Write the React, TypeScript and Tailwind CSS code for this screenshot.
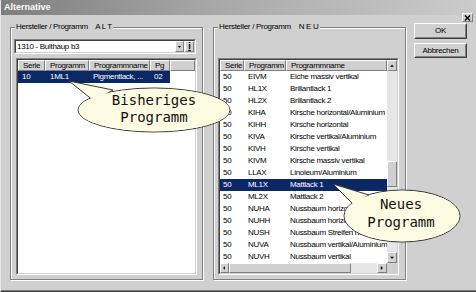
import React from 'react';

const uiFont = "font-['Liberation_Sans_Narrow','Liberation_Sans',Arial,sans-serif]";
const monoFont = "font-['DejaVu_Sans_Mono','Liberation_Mono',monospace]";
const small = 'text-[8px] tracking-[-0.3px]';

const raisedThin = 'bg-[#d0d0d0] border border-t-white border-l-white border-r-[#808080] border-b-[#808080]';

const neuRows = [
  ['50', 'EIVM', 'Eiche massiv vertikal'],
  ['50', 'HL1X', 'Brillantlack 1'],
  ['50', 'HL2X', 'Brillantlack 2'],
  ['50', 'KIHA', 'Kirsche horizontal/Aluminium'],
  ['50', 'KIHH', 'Kirsche horizontal'],
  ['50', 'KIVA', 'Kirsche vertikal/Aluminium'],
  ['50', 'KIVH', 'Kirsche vertikal'],
  ['50', 'KIVM', 'Kirsche massiv vertikal'],
  ['50', 'LLAX', 'Linoleum/Aluminium'],
  ['50', 'ML1X', 'Mattlack 1'],
  ['50', 'ML2X', 'Mattlack 2'],
  ['50', 'NUHA', 'Nussbaum horizontal/Aluminium'],
  ['50', 'NUHH', 'Nussbaum horizontal'],
  ['50', 'NUSH', 'Nussbaum Streifen horizontal'],
  ['50', 'NUVA', 'Nussbaum vertikal/Aluminium'],
  ['50', 'NUVH', 'Nussbaum vertikal'],
];

// small black arrow for scroll / combo buttons
const Arrow = ({ dir }: { dir: 'up' | 'down' | 'left' | 'right' }) => {
  const pts = {
    up: '2.5,6 7.5,6 5,3.5',
    down: '2.5,3.5 7.5,3.5 5,6',
    left: '5.5,2.5 5.5,7.5 3,5',
    right: '3.5,2.5 3.5,7.5 6,5',
  }[dir];
  return (
    <svg width="10" height="10" viewBox="0 0 10 10" className="block">
      <polygon points={pts} fill="#000" />
    </svg>
  );
};

const ScrollBtn = ({ dir, className = '' }: { dir: 'up' | 'down' | 'left' | 'right'; className?: string }) => (
  <div className={`${raisedThin} flex items-center justify-center shrink-0 ${className}`}>
    <Arrow dir={dir} />
  </div>
);

const HeaderCell = ({ label, w }: { label?: string; w?: string }) => (
  <div className={`${raisedThin} h-[11px] pl-[4px] ${small} leading-[9px] whitespace-nowrap overflow-hidden ${w ?? 'flex-1'}`}>
    {label}
  </div>
);

const Button = ({ label, h }: { label: string; h: string }) => (
  <div className={`w-[53px] ${h} flex border border-t-white border-l-white border-r-[#404040] border-b-[#404040]`}>
    <div className={`flex-1 flex items-center justify-center border border-transparent border-r-[#808080] border-b-[#808080] ${small} leading-none`}>
      {label}
    </div>
  </div>
);

const Sunken = ({ children, className = '' }: { children: React.ReactNode; className?: string }) => (
  <div className={`flex border border-t-[#808080] border-l-[#808080] border-r-white border-b-white ${className}`}>
    <div className="flex-1 flex min-w-0 border border-t-[#404040] border-l-[#404040] border-r-[#d0d0d0] border-b-[#d0d0d0] bg-white">
      {children}
    </div>
  </div>
);

const Group = ({ title, tag, children }: { title: string; tag: string; children: React.ReactNode }) => (
  <fieldset className="w-[193px] min-w-0 border border-[#808080] shadow-[inset_1px_1px_0_#fff,1px_1px_0_#fff] px-[3px] pt-[6px] pb-[4px] flex flex-col">
    <legend className={`ml-[1px] px-[1px] ${small} leading-[12px] bg-[#d0d0d0] whitespace-pre`}>
      {title}    {tag}
    </legend>
    {children}
  </fieldset>
);

const Callouts = () => (
  <svg width="476" height="292" className="absolute inset-0 pointer-events-none">
    <g stroke="#383838" strokeWidth="1" fill="#fdfbe1">
      <ellipse cx="153" cy="110" rx="76" ry="22" />
      <polygon points="68,81 112,90 93,101" />
      <ellipse cx="401" cy="216" rx="58" ry="26" />
      <polygon points="332,184 368,195 352,204" />
    </g>
    <g fill="#fdfbe1">
      <ellipse cx="153" cy="110" rx="75.3" ry="21.3" />
      <ellipse cx="401" cy="216" rx="57.3" ry="25.3" />
    </g>
    <g className={monoFont} fontSize="14" fill="#111" textAnchor="middle">
      <text x="153" y="105">Bisheriges</text>
      <text x="153" y="122">Programm</text>
      <text x="400" y="209">Neues</text>
      <text x="400" y="227">Programm</text>
    </g>
  </svg>
);

export default function App() {
  return (
    <div className={`relative w-[476px] h-[292px] overflow-hidden bg-[#d0d0d0] text-black ${uiFont} border-l border-l-[#e8e8e8] border-b border-b-[#404040] shadow-[inset_0_-1px_0_#808080]`}>
      {/* title bar */}
      <div className="h-[15px] flex items-center pl-[3px] bg-[linear-gradient(90deg,#7e7e7e,#a8a8a8_45%,#cbcbcb)] text-white font-bold text-[9px] font-['Liberation_Sans',Arial,sans-serif]">
        Alternative
      </div>
      <div className={`${raisedThin} absolute right-[3px] top-[13px] w-[11px] h-[9px] flex items-center justify-center`}>
        <svg width="7" height="6" viewBox="0 0 7 6" className="block">
          <path d="M1 0.5 L6 5.5 M6 0.5 L1 5.5" stroke="#000" strokeWidth="1.4" />
        </svg>
      </div>

      <div className="flex pl-[9px] pt-[6px]">
        {/* ALT */}
        <Group title="Hersteller / Programm" tag="A L T">
          <Sunken className="w-[182px] h-[15px]">
            <div className={`flex-1 flex items-center pl-[1px] ${small} leading-none whitespace-nowrap`}>1310 - Bulthaup b3</div>
            <div className="flex gap-[1px]">
              <ScrollBtn dir="down" className="w-[9px] h-[11px]" />
              <div className={`${raisedThin} w-[9px] h-[11px] flex items-center justify-center text-[9px] font-bold leading-none`}>
                <span className="underline">i</span>
              </div>
            </div>
          </Sunken>
          <Sunken className="mt-[4px] ml-[2px] w-[181px] h-[217px]">
            <div className="flex-1 flex flex-col min-w-0">
              <div className="flex">
                <HeaderCell label="Serie" w="w-[27px]" />
                <HeaderCell label="Programm" w="w-[44px]" />
                <HeaderCell label="Programmname" w="w-[61px]" />
                <HeaderCell label="Pg" w="w-[20px]" />
                <HeaderCell />
              </div>
              <div className="flex">
                <div className={`flex h-[12px] items-center bg-[#0a2766] text-white ${small} leading-none whitespace-nowrap`}>
                  <div className="w-[27px] pl-[4px]">10</div>
                  <div className="w-[44px] pl-[5px]">1ML1</div>
                  <div className="w-[61px] pl-[4px] overflow-hidden">Pigmentlack, ...</div>
                  <div className="w-[20px] pl-[4px]">02</div>
                </div>
              </div>
            </div>
          </Sunken>
        </Group>

        <div className="w-[10px]" />

        {/* NEU */}
        <Group title="Hersteller / Programm" tag="N E U">
          <div className="h-[15px]" />
          <Sunken className="mt-[4px] ml-[1px] w-[181px] h-[217px]">
            <div className="flex-1 flex flex-col min-w-0">
              <div className="flex">
                <HeaderCell label="Serie" w="w-[24px]" />
                <HeaderCell label="Programm" w="w-[42px]" />
                <HeaderCell label="Programmname" />
              </div>
              <div className="flex flex-col">
                {neuRows.map(([s, p, n]) => {
                  const sel = p === 'ML1X';
                  return (
                    <div
                      key={p}
                      className={`flex h-[12px] items-center ${small} leading-none whitespace-nowrap overflow-hidden ${sel ? 'bg-[#0a2766] text-white' : ''}`}
                    >
                      <div className="w-[24px] shrink-0 pl-[3px]">{s}</div>
                      <div className="w-[42px] shrink-0 pl-[4px]">{p}</div>
                      <div className="flex-1 pl-[4px] overflow-hidden">{n}</div>
                    </div>
                  );
                })}
              </div>
              {/* horizontal scrollbar */}
              <div className="flex h-[10px] bg-[#e6e6e6]">
                <ScrollBtn dir="left" className="w-[9px] h-[10px]" />
                <div className={`${raisedThin} w-[122px] h-[10px]`} />
                <div className="flex-1" />
                <ScrollBtn dir="right" className="w-[10px] h-[10px]" />
              </div>
            </div>
            {/* vertical scrollbar */}
            <div className="w-[10px] flex flex-col">
              <ScrollBtn dir="up" className="w-[10px] h-[11px]" />
              <div className="flex-1 bg-[#e6e6e6] flex flex-col">
                <div className="h-[90px]" />
                <div className={`${raisedThin} h-[26px]`} />
              </div>
              <ScrollBtn dir="down" className="w-[10px] h-[11px]" />
              <div className="h-[10px] bg-[#d0d0d0]" />
            </div>
          </Sunken>
        </Group>

        <div className="flex flex-col gap-[4px] ml-[8px] mt-[2px]">
          <Button label="OK" h="h-[16px]" />
          <Button label="Abbrechen" h="h-[15px]" />
        </div>
      </div>

      <Callouts />
    </div>
  );
}
